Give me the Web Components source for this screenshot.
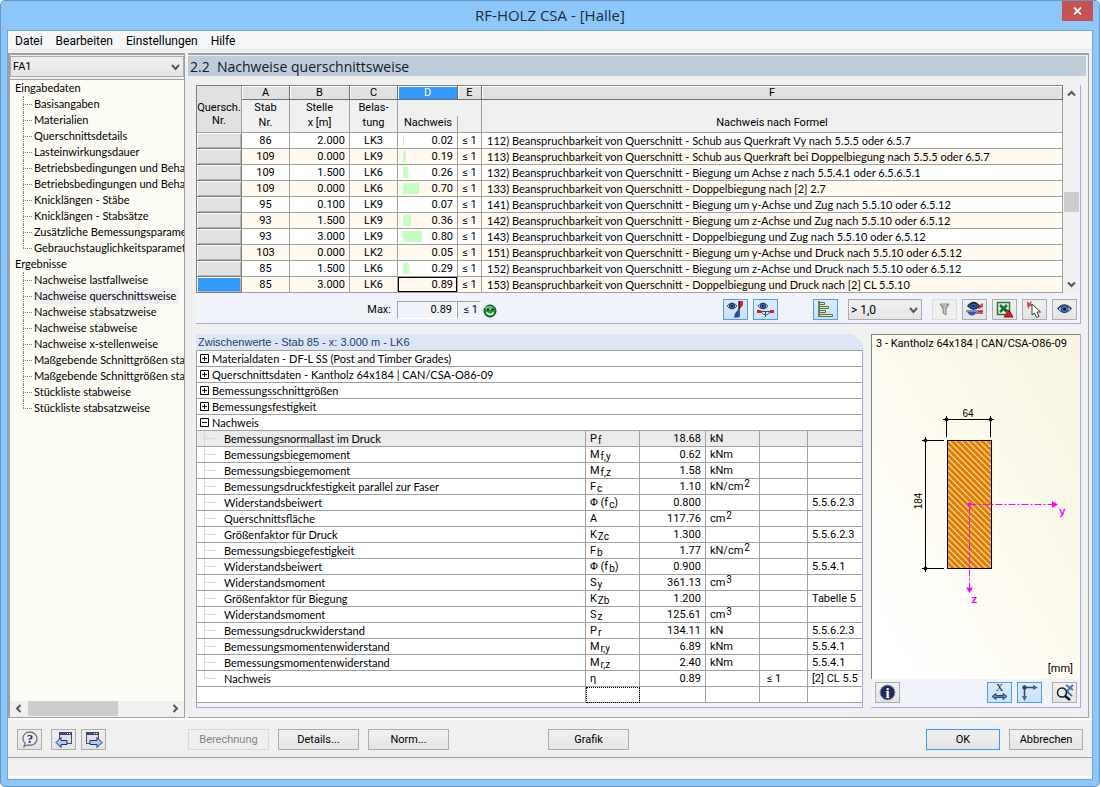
<!DOCTYPE html>
<html lang="de">
<head>
<meta charset="utf-8">
<title>RF-HOLZ CSA - [Halle]</title>
<style>
html,body{margin:0;min-height:100%}
body{font:11px/16px Roboto,"Liberation Sans",sans-serif;color:#000;background:#fff;
--ui:Roboto,"Noto Sans",sans-serif;--prose:Lato,"Noto Sans",sans-serif;--title:"Open Sans","Noto Sans",sans-serif;--line:#a0a0a0;--lilac:#a8a8e8;--strip:#f0f4fa}
</style>
</head>
<body>
<app-window caption="RF-HOLZ CSA - [Halle]">
  <menu-bar slot="menu"></menu-bar>
  <nav-pane slot="nav"></nav-pane>
  <result-view slot="main"></result-view>
  <dialog-bar slot="actions"></dialog-bar>
</app-window>
<script>
const define=(name,html,init)=>{
  const t=document.createElement('template');
  t.innerHTML=html;
  customElements.define(name,class extends HTMLElement{
    constructor(){super();this.attachShadow({mode:'open'}).append(t.content.cloneNode(true));}
    connectedCallback(){if(init&&!this.ready){this.ready=true;init(this,this.shadowRoot);}}
  });
};

/* ---------- icons ---------- */
const eye='<path d="M2 8Q8 1 15 8Q8 15 2 8Z" fill="#dfe8f5" stroke="#25354f"/><circle cx="8.500" cy="8" r="3.600" fill="#3f74c4" stroke="#1d3a78"/><circle cx="8.500" cy="8" r="1.500" fill="#0a1020"/><path d="M1.500 8Q8 0 15.500 8" fill="none" stroke="#3b4a66" stroke-width="1.500"/>';
const smallEye='<path d="M0 5Q5-1 10 5Q5 11 0 5Z" fill="#c9d6ea" stroke="#4b5d80"/><circle cx="5" cy="5" r="2.700" fill="#3d68b4" stroke="#22345c"/><circle cx="5" cy="5" r="1" fill="#0a1020"/>';
const win='<rect x="4.500" y="1.500" width="12" height="11" fill="#dfe0e4" stroke="#4c5061"/><path d="M4 1h13v3H4z" fill="#3d4775"/><path d="M12 2.500h1M14 2.500h1" stroke="#fff"/>';
const icons={
help:'<path d="M9 1C4.500 1 2 4 2 7.500c0 2 .7 3.500 2 4.500l-1 3.500 3.500-1.500C12 15 16 12.500 16 7.500 16 4 13 1 9 1Z" fill="#e9ecf1" stroke="#72767f" stroke-width="1.300"/><text x="9" y="12" text-anchor="middle" font-family="Liberation Serif" font-weight="bold" font-size="13" fill="#1d2d6c">?</text>',
prev:win+'<path d="M1 11.500 6 6.500v3h6v4H6v3Z" fill="#a9cdf5" stroke="#1c2c78"/>',
next:'<g transform="translate(-3 0)">'+win+'</g><path d="M17 11.500 12 6.500v3H5v4h7v3Z" fill="#a9cdf5" stroke="#1c2c78"/>',
section:smallEye+'<path d="M12 0h4v4l-4 5Z" fill="#d02a2a"/><path d="M12 0v16" stroke="#14182c" stroke-width="1.300"/><path d="M11.500 8v8.500H7l1-4Z" fill="#2b48b6"/>',
beam:'<g transform="translate(1 0)">'+smallEye+'</g><path d="M2 10.500h13M4 11q5 6 9 0M8.500 11v5" fill="none" stroke="#434c5e"/><path d="M0 9h4v3H0zM13 9h4v3h-4z" fill="#cf2424"/>',
bars:'<path d="M2 0v16" stroke="#3f6a36" stroke-width="1.500"/><path d="M2.500 1.500h5v2h-5zM2.500 5.500h9v2h-9zM2.500 9.500h6v2h-6zM2.500 13.500h13v2h-13z" fill="#f3e7b5" stroke="#57704b"/>',
filter:'<path d="M4 3h9L10 8v6l-3-2V8Z" fill="#a5a5a5" stroke="#8d8d8d"/><path d="M6 4h4L8.500 7v5" fill="none" stroke="#d4d4d4"/>',
diagram:'<path d="M10 6l7-4v4l-4 2ZM9 13q4-5 8-3v3Z" fill="#e0504a"/><path d="M0 10h17" stroke="#26345a"/><path d="M1 11h10q-5 7-10 0Z" fill="#2b56bd"/><path d="M2 5Q8-2 13 5Q8 11 2 5Z" fill="#eaf1fa" stroke="#12203a" stroke-width="1.500"/><circle cx="7.500" cy="5" r="3" fill="#2d71cb" stroke="#0b2350"/><circle cx="7.500" cy="5" r="1"/>',
excel:'<rect x="1.500" y="1.500" width="12" height="12" fill="#e7f2e4" stroke="#217a38" stroke-width="1.500"/><path d="M4 4l7 7M11 4 4 11" stroke="#18752f" stroke-width="2.500"/><path d="M8 16h9l-4-7Z" fill="#d71f1f" stroke="#8a1010"/><path d="M9 8l4 2" stroke="#222"/>',
pick:'<path d="M1 0l2 2 3-2-1 3 3 2-4 0-2 3-1-4Z" fill="#d9504e"/><path d="M6 3v11l2.500-2 2 4.500 2.500-1-2-4.500h3.500Z" fill="#fff" stroke="#3a3a3a"/>',
eye,
info:'<circle cx="8.500" cy="8.500" r="7.500" fill="#1c2b57" stroke="#8b98bb"/><text x="8.500" y="14" text-anchor="middle" font-family="Liberation Serif" font-weight="bold" font-size="15" fill="#fff">i</text>',
axisx:'<text x="8.500" y="7" text-anchor="middle" font-family="Liberation Serif" font-size="10" fill="#102040">X</text><path d="M1 12.500 5 9.500v2h7v-2l4 3-4 3v-2H5v2Z" fill="#5382bd" stroke="#28446f"/>',
axes:'<path d="M3.500 4v10M3 3.500h11" stroke="#3b4860" stroke-width="1.500"/><circle cx="3.500" cy="3.500" r="2.200" fill="#303e78"/><path d="M12 1l5 2.500L12 6ZM1 12l2.500 5L6 12Z" fill="#42688f"/>',
zoomx:'<path d="M7 4 16 12M17 1Q11 6 8 13M10 1l7 5" fill="none" stroke="#3d74b9" stroke-width="1.800"/><circle cx="6" cy="8.500" r="4.500" fill="#eef3f8" fill-opacity=".7" stroke="#1b1b1b" stroke-width="1.500"/><path d="m9 12 5 4" stroke="#181818" stroke-width="2.500"/>'
};
define('icon-button',`<style>
:host{display:block;flex:none;width:25px;height:21px}
button{box-sizing:border-box;display:grid;place-items:center;width:100%;height:100%;padding:0;border:1px solid #adadad;background:linear-gradient(#f0f0f0,#e4e4e4)}
:host([pressed]) button{border-color:#569de5;background:linear-gradient(#dcecfc,#c8e2fb)}
:host([off]) button{border-color:#dcdcdc;background:#efefef}
svg{display:block;overflow:visible}
</style><button type="button"><svg width="17" height="17" viewBox="0 0 17 17" aria-hidden="true"></svg></button>`,(h,r)=>{
  const b=r.querySelector('button');b.setAttribute('aria-label',h.getAttribute('label'));
  b.disabled=h.hasAttribute('off');
  if(h.hasAttribute('pressed'))b.setAttribute('aria-pressed','true');
  r.querySelector('svg').innerHTML=icons[h.getAttribute('icon')];
});

define('push-button',`<style>
:host{display:block;flex:none;width:81px;height:21px}
button{box-sizing:border-box;width:100%;height:100%;padding:0;border:1px solid #acacac;background:linear-gradient(#f0f0f0,#e5e5e5);font:11px/16px var(--ui);color:#000}
:host([default]) button{border-color:#3399ff}
button:disabled{border-color:#d9d9d9;background:#efefef;color:#838383}
</style><button type="button"><slot></slot></button>`,(h,r)=>{r.querySelector('button').disabled=h.hasAttribute('off')});

define('drop-down',`<style>
:host{display:block;position:relative;height:21px}
select{box-sizing:border-box;appearance:none;width:100%;height:100%;margin:0;padding:1px 20px 0 2px;border:1px solid #acacac;border-radius:0;background:linear-gradient(#f0f0f0,#e5e5e5);font:var(--size,11px)/16px var(--ui);color:#000}
svg{position:absolute;right:4px;top:50%;margin-top:-3px;pointer-events:none}
</style><select></select><svg width="9" height="7" viewBox="0 0 9 7" aria-hidden="true"><path d="M1 1l3.500 4L8 1" fill="none" stroke="#555" stroke-width="2"/></svg>`,(h,r)=>{
  const s=r.querySelector('select');s.setAttribute('aria-label',h.getAttribute('label'));s.add(new Option(h.getAttribute('value')));
});

define('scroll-strip',`<style>
:host{display:flex;background:#f0f0f0}
:host([vertical]){flex-direction:column;width:15px}
:host(:not([vertical])){height:16px}
.end{flex:none;width:17px;height:15px;display:grid;place-items:center}
:host([vertical]) .end{width:15px;height:17px}
.track{flex:1;display:flex}
:host([vertical]) .track{flex-direction:column}
.thumb{background:#cdcdcd;margin:0 0 1px 1px;width:90px}
:host([vertical]) .thumb{width:15px;height:20px;margin:90px 0 0}
:host(:not([vertical])) svg{transform:rotate(-90deg)}
</style><div class="end"><svg width="9" height="7" viewBox="0 0 9 7"><path d="M1 5.500 4.500 2 8 5.500" fill="none" stroke="#555" stroke-width="2"/></svg></div>
<div class="track"><div class="thumb"></div></div>
<div class="end"><svg width="9" height="7" viewBox="0 0 9 7"><path d="M1 1.500 4.500 5 8 1.500" fill="none" stroke="#555" stroke-width="2"/></svg></div>`);

/* ---------- window frame ---------- */
define('app-window',`<style>
:host{box-sizing:border-box;display:flex;flex-direction:column;min-height:100vh;border:1px solid #6797c4;border-radius:5px;background:#8dc7fa;padding:0 6px 6px}
header{display:grid;grid-template-columns:31px 1fr 31px;height:29px;color:#1c2a3c}
h1{margin:0;text-align:center;font:15px/29px var(--title)}
header button{width:31px;height:20px;padding:0;border:0;background:#c75050;display:grid;place-items:center}
.body{flex:1;display:flex;flex-direction:column;border:1px solid #72a5d6;background:#f0f0f0}
.panes{flex:1;display:flex;padding:3px 3px 0 0}
::slotted([slot=main]){flex:1;min-width:0}
.status{border-top:1px solid var(--line);height:18px;border-bottom:2px solid #fff;margin-bottom:1px}
</style>
<header><span></span><h1></h1><button type="button" aria-label="Schließen"><svg width="9" height="8" viewBox="0 0 9 8"><path d="M1 .5l7 7M8 .5l-7 7" stroke="#fff" stroke-width="1.800"/></svg></button></header>
<div class="body"><slot name="menu"></slot><div class="panes"><slot name="nav"></slot><slot name="main"></slot></div><slot name="actions"></slot><div class="status"></div></div>`,(h,r)=>{r.querySelector('h1').textContent=h.getAttribute('caption')});

define('menu-bar',`<style>
:host{display:block;background:#f5f6f7;border-bottom:1px solid #e6e6e6}
nav{display:flex;gap:13px;height:18px;padding-left:7px}
a{font:12px/20px var(--ui);color:#000;text-decoration:none}
</style><nav><a href="#datei">Datei</a><a href="#bearbeiten">Bearbeiten</a><a href="#einstellungen">Einstellungen</a><a href="#hilfe">Hilfe</a></nav>`);

/* ---------- navigator ---------- */
define('nav-pane',`<style>
:host{box-sizing:border-box;display:flex;flex-direction:column;flex:none;width:177px;margin-right:3px;border:solid var(--line);border-width:2px 1px 1px 2px;padding-top:1px}
.tree{flex:1;margin-top:2px;border-top:1px solid var(--line);background:#fcfbf4;overflow:hidden;font:11px/16px var(--prose);white-space:nowrap;min-width:0}
ul{list-style:none;margin:0;padding:0}
.tree>ul{padding-left:5px}
li li{position:relative;padding-left:19px}
li li::before{content:"";position:absolute;left:8px;top:0;height:16px;border-left:1px dotted #808080}
li li:last-child::before{height:8px}
li li::after{content:"";position:absolute;left:8px;top:8px;width:9px;border-top:1px dotted #808080}
a{color:#000;text-decoration:none}
a[aria-current]{display:inline-block;background:#f0f0f4;padding-right:3px}
</style>
<drop-down label="Bemessungsfall" value="FA1"></drop-down>
<div class="tree"><ul></ul></div>
<scroll-strip></scroll-strip>`,(h,r)=>{
  const groups=[['Eingabedaten',['Basisangaben','Materialien','Querschnittsdetails','Lasteinwirkungsdauer','Betriebsbedingungen und Beha','Betriebsbedingungen und Beha','Knicklängen - Stäbe','Knicklängen - Stabsätze','Zusätzliche Bemessungsparame','Gebrauchstauglichkeitsparamet']],
  ['Ergebnisse',['Nachweise lastfallweise','Nachweise querschnittsweise','Nachweise stabsatzweise','Nachweise stabweise','Nachweise x-stellenweise','Maßgebende Schnittgrößen sta','Maßgebende Schnittgrößen sta','Stückliste stabweise','Stückliste stabsatzweise']]];
  r.querySelector('ul').innerHTML=groups.map(([g,i])=>`<li>${g}<ul>${i.map(t=>`<li><a href="#"${t==='Nachweise querschnittsweise'?' aria-current="page"':''}>${t}</a></li>`).join('')}</ul></li>`).join('');
});

/* ---------- main view ---------- */
define('result-view',`<style>
:host{box-sizing:border-box;display:flex;flex-direction:column;border:solid var(--line);border-width:2px 1px 1px 0;padding-top:1px}
h2{margin:0 2px 9px 0;height:20px;background:#bfcddb;font:14px/21px var(--title);padding-left:2px;color:#101828}
.stack{flex:1;display:flex;flex-direction:column;gap:10px;padding:0 7px 9px 8px}
.lower{flex:1;display:flex;gap:8px}
value-table{flex:1;min-width:0}
</style><h2>2.2&nbsp; Nachweise querschnittsweise</h2>
<div class="stack"><design-grid></design-grid><div class="lower"><value-table></value-table><section-view></section-view></div></div>`);

define('design-grid',`<style>
:host{display:block;border:solid var(--lilac);border-width:0 1px 1px 0;background:var(--strip)}
.top{display:flex}
table{flex:1;table-layout:fixed;border-collapse:separate;border-spacing:0;border:solid #808080;border-width:1px 0 0 1px;width:100%}
th,td{box-sizing:border-box;padding:0;font-weight:normal;border:solid var(--line);border-width:0 1px 1px 0;font-size:11px;line-height:15px;white-space:nowrap}
.letters th{height:14px;line-height:13px;background:#e1e1e1;border-color:#6e6e6e;box-shadow:inset 1px 1px #fff}
.letters th.on{background:#3399ff;color:#fff}
.letters th:first-child{border-color:var(--line);box-shadow:none;padding-top:10px}
.labels th{height:33px;background:#f0f0f0;line-height:15px;vertical-align:bottom;padding-bottom:2px}
.labels th:nth-child(4){background:linear-gradient(var(--line),var(--line)) right bottom/1px 16px no-repeat #f0f0f0;border-right:0}
tbody td{height:16px;background:#fff}
tbody tr:nth-child(even) td{background:#fff9ef}
tbody th{height:16px;background:#e1e1e1;border-color:#808080;box-shadow:inset 1px 1px #fff,inset -1px -1px #b4b4b4}
tbody tr:last-child th{background:#3399ff}
.c{text-align:center}.r{text-align:right;padding-right:4px}
td.text{text-align:left;padding-left:5px;overflow:hidden;font-family:var(--prose)}
.ratio{display:flex;align-items:center;padding:0 4px 0 5px;height:15px;box-sizing:border-box}
.ratio i{height:11px;background:#c3ffc3}
.ratio b{font-weight:normal;margin-left:auto}
tr:last-child .ratio{outline:1px solid #000;outline-offset:-1px}
scroll-strip{background:#f0f0f0;margin:0 1px}
.tools{box-sizing:border-box;display:flex;align-items:center;height:30px;padding:3px 3px 0 0}
.max{box-sizing:border-box;width:201px;text-align:right;padding-right:6px}
output{box-sizing:border-box;height:18px;line-height:16px;border:1px solid;border-color:var(--line) #fff #fff var(--line);text-align:right;padding-right:4px}
.o1{width:60px}.o2{width:24px;padding-right:2px}
.smile{margin:2px auto 0 2px}
.g5{margin-left:5px}.g35{margin-left:35px}.g10{margin-left:10px}
drop-down{width:74px;--size:12px}
</style>
<div class="top"><table><colgroup><col style="width:45px"><col style="width:48px"><col style="width:60px"><col style="width:48px"><col style="width:60px"><col style="width:24px"><col></colgroup>
<thead><tr class="letters"><th rowspan="2">Quersch.<br>Nr.</th><th>A</th><th>B</th><th>C</th><th class="on">D</th><th>E</th><th>F</th></tr>
<tr class="labels"><th>Stab<br>Nr.</th><th>Stelle<br>x [m]</th><th>Belas-<br>tung</th><th>Nachweis</th><th></th><th>Nachweis nach Formel</th></tr></thead><tbody></tbody></table><scroll-strip vertical></scroll-strip></div>
<div class="tools"><label class="max" for="max">Max:</label><output id="max" class="o1">0.89</output><output class="o2">≤ 1</output>
<svg class="smile" width="14" height="14" viewBox="0 0 14 14" role="img" aria-label="Erfüllt"><circle cx="7" cy="7" r="6" fill="#1f9a35" stroke="#0c3a14"/><ellipse cx="6" cy="4" rx="4" ry="2" fill="#8fe09a" opacity=".6"/><circle cx="5" cy="5.500" r="1"/><circle cx="9.500" cy="5.500" r="1"/><path d="M3.500 8.500q4 4 7 0" fill="none" stroke="#f4fff4" stroke-width="1.500"/></svg>
<icon-button pressed icon="section" label="Querschnitt anzeigen"></icon-button><icon-button class="g5" pressed icon="beam" label="Stab anzeigen"></icon-button>
<icon-button class="g35" pressed icon="bars" label="Farbbalken"></icon-button><drop-down class="g10" label="Ausnutzung" value="> 1,0"></drop-down>
<icon-button class="g10" off icon="filter" label="Filter"></icon-button><icon-button class="g5" icon="diagram" label="Ergebnisverläufe"></icon-button><icon-button class="g5" icon="excel" label="Excel-Export"></icon-button><icon-button class="g5" icon="pick" label="Stab wählen"></icon-button><icon-button class="g5" icon="eye" label="Ansichtsmodus"></icon-button></div>`,(h,r)=>{
  const p='Beanspruchbarkeit von Querschnitt - ';
  const rows=[[86,'2.000','LK3','0.02',1,112,'Schub aus Querkraft Vy nach 5.5.5 oder 6.5.7'],[109,'0.000','LK9','0.19',3,113,'Schub aus Querkraft bei Doppelbiegung nach 5.5.5 oder 6.5.7'],[109,'1.500','LK6','0.26',5,132,'Biegung um Achse z nach 5.5.4.1 oder 6.5.6.5.1'],[109,'0.000','LK6','0.70',16,133,'Doppelbiegung nach [2] 2.7'],[95,'0.100','LK9','0.07',0,141,'Biegung um y-Achse und Zug nach 5.5.10 oder 6.5.12'],[93,'1.500','LK9','0.36',8,142,'Biegung um z-Achse und Zug nach 5.5.10 oder 6.5.12'],[93,'3.000','LK9','0.80',19,143,'Doppelbiegung und Zug nach 5.5.10 oder 6.5.12'],[103,'0.000','LK2','0.05',0,151,'Biegung um y-Achse und Druck nach 5.5.10 oder 6.5.12'],[85,'1.500','LK6','0.29',6,152,'Biegung um z-Achse und Druck nach 5.5.10 oder 6.5.12'],[85,'3.000','LK6','0.89',0,153,'Doppelbiegung und Druck nach [2] CL 5.5.10']];
  r.querySelector('tbody').innerHTML=rows.map(([s,x,l,v,w,n,t])=>`<tr><th></th><td class="c">${s}</td><td class="r">${x}</td><td class="c">${l}</td><td><div class="ratio"><i style="width:${w}px"></i><b>${v}</b></div></td><td class="c">≤ 1</td><td class="text">${n}) ${p}${t}</td></tr>`).join('');
});

define('value-table',`<style>
:host{display:flex;flex-direction:column}
h3{margin:0;height:16px;padding-left:2px;background:#dce6f5;clip-path:polygon(0 0,calc(100% - 10px) 0,100% 10px,100% 100%,0 100%);font:11px/16px "Liberation Sans",Arial,sans-serif;color:#1f4068}
.wrap{flex:1;display:flex;flex-direction:column;border:solid var(--lilac);border-width:0 1px 1px 0;background:linear-gradient(var(--line),var(--line)) left/1px 100% no-repeat #f0f4f8}
table{width:100%;table-layout:fixed;border-collapse:separate;border-spacing:0;border:solid var(--line);border-width:1px 0 0 1px}
td{box-sizing:border-box;height:16px;padding:0 4px;border:solid var(--line);border-width:0 1px 1px 0;background:#fff;font-size:11px;line-height:15px;white-space:nowrap;overflow:hidden}
td:last-child{border-right:0;text-overflow:clip;padding-right:0}
.group td{padding-left:3px;font-family:var(--prose)}
.group td span{display:flex;align-items:center;gap:3px;height:15px}
.first td{background:#ebebeb}
.name{position:relative;padding-left:27px;font-family:var(--prose)}
.name::before{content:"";position:absolute;left:7px;top:0;height:16px;border-left:1px solid #d8d8d8}
.name::after{content:"";position:absolute;left:7px;top:7px;width:12px;border-top:1px solid #d8d8d8}
.last .name::before{height:8px}
.n{text-align:right}
sub,sup{font-size:10px;line-height:0;margin-left:1px}sub{vertical-align:-2px}sup{vertical-align:3px}
.focus{outline:1px dotted #000;outline-offset:-1px}
</style><h3>Zwischenwerte - Stab 85 - x: 3.000 m - LK6</h3><div class="wrap"><table><colgroup><col><col style="width:54px"><col style="width:66px"><col style="width:54px"><col style="width:48px"><col style="width:54px"></colgroup><tbody></tbody></table></div>`,(h,r)=>{
  const box=o=>`<svg width="9" height="9" viewBox="0 0 9 9" aria-hidden="true"><path d="M.5.5h8v8h-8zM2 4.500h5${o?'M4.500 2v5':''}" fill="none" stroke="#000"/></svg>`;
  const groups=['Materialdaten - DF-L SS (Post and Timber Grades)','Querschnittsdaten - Kantholz 64x184 | CAN/CSA-O86-09','Bemessungsschnittgrößen','Bemessungsfestigkeit','Nachweis'];
  const B='Bemessungs',W='Widerstands';
  const rows=[[B+'normallast im Druck','P<sub>f</sub>','18.68','kN','',''],[B+'biegemoment','M<sub>f,y</sub>','0.62','kNm','',''],[B+'biegemoment','M<sub>f,z</sub>','1.58','kNm','',''],[B+'druckfestigkeit parallel zur Faser','F<sub>c</sub>','1.10','kN/cm<sup>2</sup>','',''],[W+'beiwert','Φ (f<sub>c</sub>)','0.800','','','5.5.6.2.3'],['Querschnittsfläche','A','117.76','cm<sup>2</sup>','',''],['Größenfaktor für Druck','K<sub>Zc</sub>','1.300','','','5.5.6.2.3'],[B+'biegefestigkeit','F<sub>b</sub>','1.77','kN/cm<sup>2</sup>','',''],[W+'beiwert','Φ (f<sub>b</sub>)','0.900','','','5.5.4.1'],[W+'moment','S<sub>y</sub>','361.13','cm<sup>3</sup>','',''],['Größenfaktor für Biegung','K<sub>Zb</sub>','1.200','','','Tabelle 5'],[W+'moment','S<sub>z</sub>','125.61','cm<sup>3</sup>','',''],[B+'druckwiderstand','P<sub>r</sub>','134.11','kN','','5.5.6.2.3'],[B+'momentenwiderstand','M<sub>r,y</sub>','6.89','kNm','','5.5.4.1'],[B+'momentenwiderstand','M<sub>r,z</sub>','2.40','kNm','','5.5.4.1'],['Nachweis','η','0.89','','&nbsp;≤ 1','[2] CL 5.5']];
  r.querySelector('tbody').innerHTML=groups.map((g,i)=>`<tr class="group"><td colspan="6"><span>${box(i<4)}${g}</span></td></tr>`).join('')
  +rows.map((d,i)=>`<tr class="${i===0?'first':i===15?'last':''}">${d.map((t,k)=>`<td class="${k===0?'name':k===2?'n':''}">${t}</td>`).join('')}</tr>`).join('')
  +'<tr><td></td><td class="focus"></td><td></td><td></td><td></td><td></td></tr>';
});

define('section-view',`<style>
:host{box-sizing:border-box;display:flex;flex-direction:column;flex:none;width:210px;border:solid var(--lilac);border-width:0 1px 1px 0;background:var(--strip)}
figure{flex:1;margin:0;display:flex;flex-direction:column;border:solid #808080;border-width:1px 0 0 1px;background:linear-gradient(60deg,#fff 10%,#fefcf1 45%,#f8f4e1);font-size:11px}
figcaption{padding-left:4px;line-height:17px;white-space:nowrap}
svg{display:block;flex:1;width:100%}
.unit{text-align:right;padding-right:7px;line-height:20px}
.bar{box-sizing:border-box;display:flex;height:28px;align-items:flex-start;padding:3px 3px 0 4px;gap:5px}
.bar icon-button:nth-child(2){margin-left:auto}
.bar icon-button:last-child{margin-left:5px}
</style><figure><figcaption>3 - Kantholz 64x184 | CAN/CSA-O86-09</figcaption>
<svg viewBox="0 0 208 307" role="img" aria-label="Querschnitt 64 x 184 mm">
<defs><pattern id="h" width="6" height="6" patternUnits="userSpaceOnUse"><rect width="6" height="6" fill="#e08000"/><path d="M-1-1 7 7M5-1 7 1M-1 5 1 7" stroke="#f8dcae" stroke-width="1.200"/></pattern></defs>
<rect x="75.500" y="88.500" width="44" height="128" fill="url(#h)" stroke="#000"/>
<g stroke="#000" fill="none"><path d="M71 67.500h51M74.500 64v21M118.500 64v21M53.500 85v135M50 88.500h22M50 216.500h22"/></g>
<path d="M74.500 65l2.500 2.500-2.500 2.500-2.500-2.500ZM118.500 65l2.500 2.500-2.500 2.500-2.500-2.500ZM53.500 86l2.500 2.500-2.500 2.500-2.500-2.500ZM53.500 214l2.500 2.500-2.500 2.500-2.500-2.500Z"/>
<g font-family="Liberation Sans" font-size="10" text-anchor="middle"><text x="96" y="65">64</text><text transform="translate(50 149) rotate(-90)">184</text></g>
<g stroke="#f0f" fill="none" stroke-dasharray="7 2 2 2"><path d="M97.500 152.500H182M97.500 152.500V236"/></g>
<g fill="#f0f"><circle cx="97.500" cy="152.500" r="2"/><path d="M180 149l6 3.500-6 3.500ZM94 235.500h7l-3.500 5.500Z"/>
<g font-family="Liberation Mono" font-weight="bold" font-size="11"><text x="187" y="163">y</text><text x="99" y="251">z</text></g></g>
</svg><div class="unit">[mm]</div></figure>
<div class="bar"><icon-button icon="info" label="Info"></icon-button><icon-button pressed icon="axisx" label="Bemaßung"></icon-button><icon-button pressed icon="axes" label="Achsen"></icon-button><icon-button icon="zoomx" label="Ansicht zurücksetzen"></icon-button></div>`);

define('dialog-bar',`<style>
:host{display:flex;align-items:flex-start;border-top:2px solid #fff;padding:9px 9px 7px;height:21px}
.g8{margin-left:9px}.g5{margin-left:5px}.g82{margin-left:82px}.g99{margin-left:99px}.end{margin-left:auto}
.end,.end+push-button{width:74px}
</style><icon-button icon="help" label="Hilfe"></icon-button><icon-button class="g8" icon="prev" label="Vorherige Maske"></icon-button><icon-button class="g5" icon="next" label="Nächste Maske"></icon-button>
<push-button class="g82" off>Berechnung</push-button><push-button class="g8">Details...</push-button><push-button class="g8">Norm...</push-button><push-button class="g99">Grafik</push-button>
<push-button class="end" default>OK</push-button><push-button class="g8">Abbrechen</push-button>`);
</script>
</body>
</html>
